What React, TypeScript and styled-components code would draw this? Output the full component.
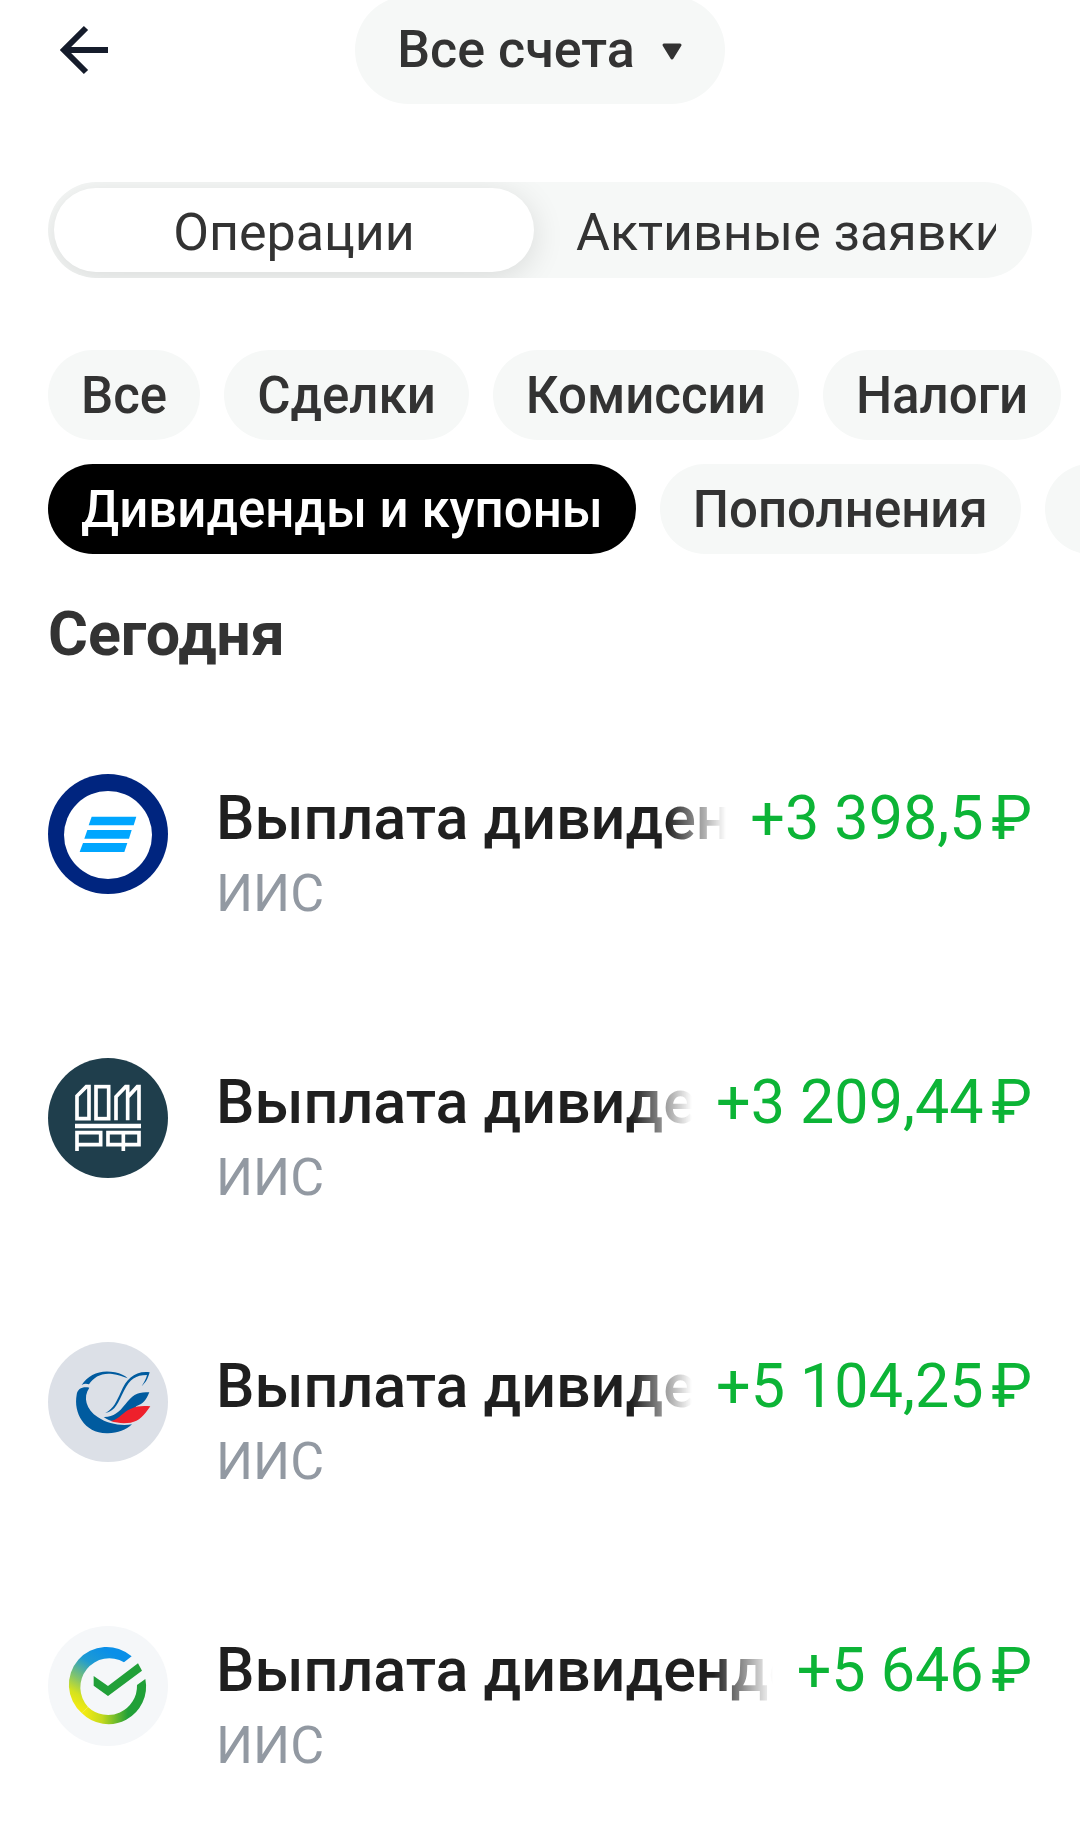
import React from 'react';
import styled, { createGlobalStyle } from 'styled-components';

const colors = {
    white: '#ffffff',
    black: '#000000',
    surface: '#f6f8f7',
    text: '#333333',
    title: '#1f1f1f',
    muted: '#9299a2',
    green: '#0cb436',
    arrow: '#151c2b',
};

const GlobalStyle = createGlobalStyle`
  * {
    box-sizing: border-box;
  }

  body {
    margin: 0;
    background: ${colors.white};
    color: ${colors.text};
    font-family: Roboto, 'Noto Sans', sans-serif;
    overflow-x: hidden;
  }

  button,
  select {
    margin: 0;
    padding: 0;
    border: none;
    background: none;
    color: inherit;
    font: inherit;
    cursor: pointer;
  }
`;

const Page = styled.div`
  display: flex;
  flex-direction: column;
`;

const Header = styled.header`
  display: grid;
  grid-template-columns: 1fr auto 1fr;
  align-items: center;
  margin-top: -4px;
  padding: 0 48px;
`;

const BackButton = styled.button`
  width: 72px;
  height: 72px;

  svg {
    display: block;
  }
`;

const AccountPicker = styled.label`
  display: flex;
  align-items: center;
  gap: 26px;
  height: 108px;
  padding: 0 42px;
  border-radius: 54px;
  background: ${colors.surface};
`;

const AccountSelect = styled.select`
  appearance: none;
  field-sizing: content;
  font-size: 52px;
  font-weight: 500;
  line-height: 64px;
`;

const Segments = styled.div`
  display: grid;
  grid-template-columns: 1fr 1fr;
  gap: 12px;
  margin: 78px 48px 0;
  padding: 6px;
  border-radius: 48px;
  background: ${colors.surface};
  overflow: hidden;
`;

const Segment = styled.button<{ $active?: boolean }>`
  min-width: 0;
  height: 84px;
  padding: 6px 30px 0;
  border-radius: 42px;
  background: ${(props) => (props.$active ? colors.white : 'transparent')};
  box-shadow: ${(props) => (props.$active ? '0 6px 32px rgba(0, 0, 0, 0.12)' : 'none')};
  font-size: 52px;
  line-height: 64px;
`;

const SegmentLabel = styled.span<{ $clipped?: boolean }>`
  display: block;
  overflow: hidden;
  white-space: nowrap;
  text-align: ${(props) => (props.$clipped ? 'left' : 'center')};
`;

const Filters = styled.div`
  display: flex;
  flex-direction: column;
  gap: 24px;
  margin-top: 72px;
  padding-left: 48px;
  overflow: hidden;
`;

const FilterRow = styled.div`
  display: flex;
  gap: 24px;
`;

const Chip = styled.button<{ $active?: boolean }>`
  flex: none;
  min-width: 96px;
  height: 90px;
  padding: 2px 33px 0;
  border-radius: 45px;
  background: ${(props) => (props.$active ? colors.black : colors.surface)};
  color: ${(props) => (props.$active ? colors.white : colors.text)};
  font-size: 51px;
  font-weight: 500;
  line-height: 64px;
  white-space: nowrap;
`;

const DayTitle = styled.h2`
  margin: 44px 48px 40px;
  font-size: 61px;
  font-weight: 700;
  line-height: 72px;
`;

const OperationList = styled.ul`
  margin: 0;
  padding: 0 48px;
  list-style: none;
`;

const OperationRow = styled.li`
  display: flex;
  align-items: flex-start;
  padding: 64px 0 60px;
`;

const Logo = styled.svg`
  flex: none;
  width: 120px;
  height: 120px;
  margin-right: 48px;
`;

const Details = styled.div`
  flex: 1;
  min-width: 0;
  padding-top: 8px;
`;

const OperationTitle = styled.div`
  overflow: hidden;
  color: ${colors.title};
  font-size: 61px;
  font-weight: 500;
  line-height: 72px;
  white-space: nowrap;
  mask-image: linear-gradient(to left, transparent, black 60px);
`;

const AccountName = styled.div`
  color: ${colors.muted};
  font-size: 52px;
  line-height: 80px;
`;

const Amount = styled.div`
  flex: none;
  margin-left: 24px;
  padding-top: 8px;
  color: ${colors.green};
  font-size: 61px;
  line-height: 72px;
  white-space: nowrap;
`;

const Currency = styled.span`
  margin-left: 8px;
`;

function BarsLogo() {
    return (
        <Logo viewBox="0 0 360 360" aria-hidden="true">
            <circle cx="180" cy="180" r="180" fill="#00257f" />
            <circle cx="180" cy="183" r="132" fill="#fff" />
            <g fill="#00a6ff">
                <path d="M131 128H265L257 154H122Z" />
                <path d="M118 168H251L243 194H109Z" />
                <path d="M105 207H238L229 234H95Z" />
            </g>
        </Logo>
    );
}

function HouseLogo() {
    return (
        <Logo viewBox="0 0 360 360" aria-hidden="true">
            <circle cx="180" cy="180" r="180" fill="#1f3e4c" />
            <g fill="none" stroke="#fff" strokeWidth="11">
                <path d="M87 114L115 86H123V182H87Z" />
                <rect x="144" y="86" width="38" height="96" />
                <path d="M204 187V116L233 86H239V187M239 118L268 86H273V187" />
                <path d="M81 204H279" strokeWidth="13" />
                <path d="M87 279V224H158V260H87" />
                <path d="M180 224H273V260H180ZM226 224V279" />
            </g>
        </Logo>
    );
}

function BirdLogo() {
    return (
        <Logo viewBox="0 0 360 360" aria-hidden="true">
            <circle cx="180" cy="180" r="180" fill="#dce0e7" />
            <g fill="#005b9f">
                <path d="M124 137C104 133 88 140 86 158C76 212 108 272 176 274C207 275 234 264 252 247C220 252 180 247 150 226C114 201 104 166 124 137Z" />
                <path d="M101 129C122 96 159 82 201 91C218 95 231 101 239 109C224 103 211 98 193 96C160 92 138 105 123 127C114 124 108 125 101 129Z" />
                <path d="M172 213C198 199 206 177 219 149C236 111 260 86 305 91C299 112 293 121 281 133C290 119 294 110 297 99C263 99 246 111 228 146C210 182 203 206 172 213Z" />
                <path d="M167 225C196 226 212 212 232 187C253 158 272 148 304 151C294 175 286 186 266 192C250 206 222 236 196 238C185 236 176 232 167 225Z" />
            </g>
            <path d="M188 237C224 232 230 184 307 193C288 220 274 238 248 242C226 245 206 243 188 237Z" fill="#ee202b" />
        </Logo>
    );
}

function CheckLogo() {
    return (
        <Logo viewBox="0 0 360 360" aria-hidden="true">
            <defs>
                <linearGradient id="ringLeft" gradientUnits="userSpaceOnUse" x1="190" y1="80" x2="90" y2="245">
                    <stop offset="0" stopColor="#0a8fe8" />
                    <stop offset="0.3" stopColor="#1f9bd2" />
                    <stop offset="0.6" stopColor="#7fc36f" />
                    <stop offset="0.82" stopColor="#d4e21f" />
                    <stop offset="1" stopColor="#f2ea12" />
                </linearGradient>
                <linearGradient id="ringRight" gradientUnits="userSpaceOnUse" x1="110" y1="252" x2="240" y2="252">
                    <stop offset="0" stopColor="#f2ea12" />
                    <stop offset="0.4" stopColor="#c4d91d" />
                    <stop offset="1" stopColor="#21a038" />
                </linearGradient>
            </defs>
            <circle cx="180" cy="180" r="180" fill="#f5f7f9" />
            <path d="M251 91A113 113 0 0 0 101 261L120 243A87 87 0 0 1 228 109Z" fill="url(#ringLeft)" />
            <path d="M101 261A113 113 0 0 0 292 159L267 177A87 87 0 0 1 120 243Z" fill="url(#ringRight)" />
            <path d="M137 150L180 180L270 112L282 134L180 210L137 179Z" fill="#21a038" />
        </Logo>
    );
}

interface Operation {
    id: number;
    amount: string;
    logo: React.ReactNode;
}

const operations: Operation[] = [
    { id: 1, amount: '+3 398,5', logo: <BarsLogo /> },
    { id: 2, amount: '+3 209,44', logo: <HouseLogo /> },
    { id: 3, amount: '+5 104,25', logo: <BirdLogo /> },
    { id: 4, amount: '+5 646', logo: <CheckLogo /> },
];

const filterRows = [
    ['Все', 'Сделки', 'Комиссии', 'Налоги'],
    ['Дивиденды и купоны', 'Пополнения', ''],
];

function App() {
    const [filter, setFilter] = React.useState('Дивиденды и купоны');

    return (
        <Page>
            <GlobalStyle />
            <Header>
                <BackButton type="button" aria-label="Назад">
                    <svg width="72" height="72" viewBox="0 0 72 72" fill="none" stroke={colors.arrow} strokeWidth="6">
                        <path d="M60 36H16M38 14L16 36L38 58" />
                    </svg>
                </BackButton>
                <AccountPicker>
                    <AccountSelect aria-label="Счёт">
                        <option>Все счета</option>
                    </AccountSelect>
                    <svg width="22" height="22" viewBox="0 0 22 22" aria-hidden="true">
                        <path d="M3 6H19L11 19Z" fill={colors.text} stroke={colors.text} strokeWidth="3" strokeLinejoin="round" />
                    </svg>
                </AccountPicker>
            </Header>

            <Segments role="tablist">
                <Segment type="button" role="tab" aria-selected="true" $active>
                    <SegmentLabel>Операции</SegmentLabel>
                </Segment>
                <Segment type="button" role="tab" aria-selected="false">
                    <SegmentLabel $clipped>Активные заявки</SegmentLabel>
                </Segment>
            </Segments>

            <Filters>
                {filterRows.map((row, index) => (
                    <FilterRow key={index}>
                        {row.map((name) => (
                            <Chip
                                key={name}
                                type="button"
                                aria-label={name || 'Ещё'}
                                aria-pressed={name === filter}
                                $active={name === filter}
                                onClick={() => setFilter(name)}
                            >
                                {name}
                            </Chip>
                        ))}
                    </FilterRow>
                ))}
            </Filters>

            <DayTitle>Сегодня</DayTitle>
            <OperationList>
                {operations.map(({ id, amount, logo }) => (
                    <OperationRow key={id}>
                        {logo}
                        <Details>
                            <OperationTitle>Выплата дивидендов</OperationTitle>
                            <AccountName>ИИС</AccountName>
                        </Details>
                        <Amount>
                            {amount}
                            <Currency>₽</Currency>
                        </Amount>
                    </OperationRow>
                ))}
            </OperationList>
        </Page>
    );
}

export default App;
